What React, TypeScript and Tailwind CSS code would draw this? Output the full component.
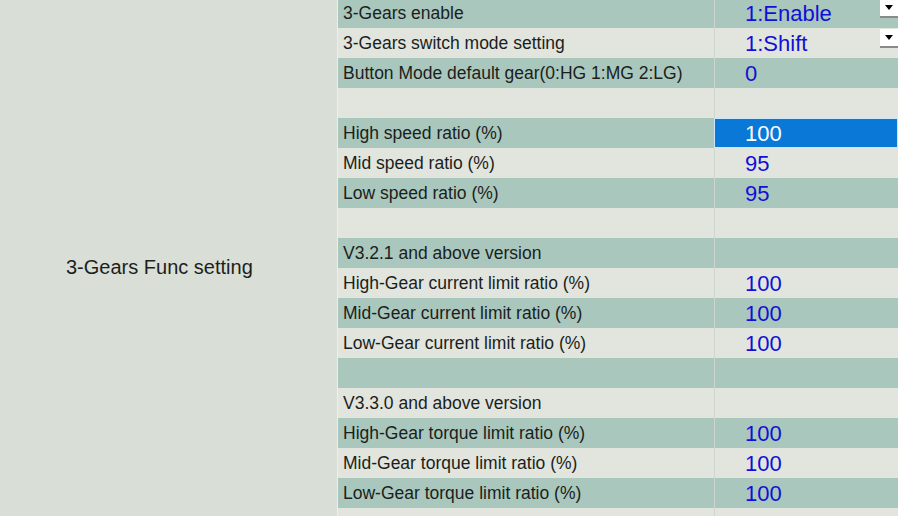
import React from 'react';

type Row = { label: string; value?: string; combo?: boolean; selected?: boolean };

const rows: Row[] = [
  { label: '3-Gears enable', value: '1:Enable', combo: true },
  { label: '3-Gears switch mode setting', value: '1:Shift', combo: true },
  { label: 'Button Mode default gear(0:HG 1:MG 2:LG)', value: '0' },
  { label: '' },
  { label: 'High speed ratio (%)', value: '100', selected: true },
  { label: 'Mid speed ratio (%)', value: '95' },
  { label: 'Low speed ratio (%)', value: '95' },
  { label: '' },
  { label: 'V3.2.1 and above version' },
  { label: 'High-Gear current limit ratio (%)', value: '100' },
  { label: 'Mid-Gear current limit ratio (%)', value: '100' },
  { label: 'Low-Gear current limit ratio (%)', value: '100' },
  { label: '' },
  { label: 'V3.3.0 and above version' },
  { label: 'High-Gear torque limit ratio (%)', value: '100' },
  { label: 'Mid-Gear torque limit ratio (%)', value: '100' },
  { label: 'Low-Gear torque limit ratio (%)', value: '100' },
  { label: '' },
];

function ComboArrow() {
  return (
    <div className="ml-auto mt-[1px] flex h-[19px] w-[18px] items-center justify-center self-start border-b-2 border-[#8a8a8a] bg-white">
      <svg width="8" height="5" viewBox="0 0 8 5">
        <path d="M0 0 L8 0 L4 5 Z" fill="#000" />
      </svg>
    </div>
  );
}

export default function App() {
  return (
    <div className="flex h-[516px] w-[898px] overflow-hidden bg-[#d9ded6] font-['Liberation_Sans',Arial,sans-serif]">
      {/* left caption */}
      <div className="flex w-[337px] shrink-0 items-center pl-[66px] pt-[18px]">
        <span className="text-[20px] text-[#1c1f1d]">3-Gears Func setting</span>
      </div>

      {/* parameter table */}
      <div className="-mt-[2px] flex flex-1 flex-col border-l border-[#eceeea]">
        {rows.map((r, i) => {
          const dark = i % 2 === 0;
          return (
            <div
              key={i}
              className={`flex h-[30px] shrink-0 ${dark ? 'bg-[#a9c7bc]' : 'bg-[#e1e5dd]'}`}
            >
              <div className="flex w-[376px] shrink-0 items-center pl-[5px] text-[17.5px] text-[#1b1e1c]">
                {r.label}
              </div>
              {r.selected ? (
                <div className="flex flex-1 items-center border border-[#cfe6f7] bg-[#0a78d7] pl-[30px] text-[22px] text-white">
                  {r.value}
                </div>
              ) : (
                <div className="flex flex-1 items-center border-l border-[#cdd6cf] pl-[30px] text-[22px] text-[#1010d8]">
                  {r.value}
                  {r.combo && <ComboArrow />}
                </div>
              )}
            </div>
          );
        })}
      </div>
    </div>
  );
}
